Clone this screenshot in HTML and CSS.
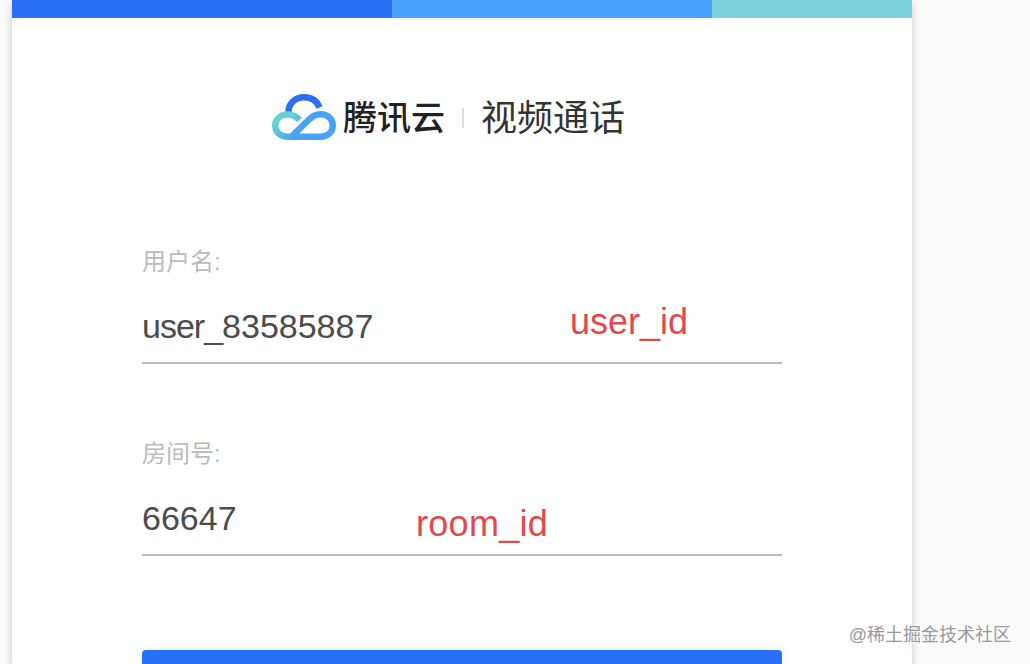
FILE: index.html
```
<!DOCTYPE html>
<html lang="zh-CN">
<head>
  <meta charset="UTF-8">
  <title>视频通话</title>
  <link rel="stylesheet" href="styles.css">
</head>
<body>

  <div class="login-card">
    <div class="color-bar">
      <div class="bar-blue"></div>
      <div class="bar-sky"></div>
      <div class="bar-teal"></div>
    </div>

    <div class="header">
      <svg class="logo" viewBox="0 0 64 46" fill="none" stroke-width="6.4">
        <defs>
          <linearGradient id="teal" x1="0" y1="0" x2="0.7" y2="1">
            <stop offset="0.3" stop-color="#6bd0d2"/>
            <stop offset="1" stop-color="#4aa9f2"/>
          </linearGradient>
        </defs>
        <path d="M16.500 18C16.500 9 23.500 3.300 32 3.300C39.500 3.300 45 7.300 47.500 13.500" stroke="#2d6ff3"/>
        <path d="M27.500 26C24.500 22.500 20.500 20.500 15.500 20.500C8.500 20.500 3.200 25.200 3.200 31.500C3.200 38 8.500 42.800 16 42.800H24" stroke="url(#teal)"/>
        <path d="M19.500 42.800H48C55.500 42.800 60.800 38 60.800 31.500C60.800 25 55.500 20.200 48.500 20.200C43.500 20.200 40 22.500 37 25.500L20 42.300" stroke="#48a2f8"/>
      </svg>
      <div class="brand">腾讯云</div>
      <div class="divider"></div>
      <div class="title">视频通话</div>
    </div>

    <div class="form">
      <div class="field">
        <div class="label">用户名:</div>
        <div class="value"><span class="prefix">user_</span>83585887</div>
        <div class="note note-user">user_id</div>
      </div>
      <div class="field">
        <div class="label">房间号:</div>
        <div class="value">66647</div>
        <div class="note note-room">room_id</div>
      </div>
      <div class="login-btn"></div>
    </div>
  </div>

  <div class="watermark">@稀土掘金技术社区</div>

</body>
</html>
```
FILE: styles.css
```
body {
  margin: 0;
  height: 664px;
  overflow: hidden;
  background: #fafafa;
  font-family: "Liberation Sans", "Noto Sans CJK SC", sans-serif;
}

.login-card {
  width: 900px;
  height: 664px;
  margin-left: 12px;
  background: #fff;
  box-shadow: 0 4px 8px rgba(0, 0, 0, 0.2);
}

.color-bar {
  display: flex;
  height: 18px;
}

.bar-blue {
  width: 380px;
  background: #2970f6;
}

.bar-sky {
  width: 320px;
  background: #48a3fb;
}

.bar-teal {
  flex: 1;
  background: #7bd2dc;
}

.header {
  display: flex;
  align-items: center;
  height: 50px;
  padding: 74px 0 0 260px;
}

.logo {
  width: 64px;
  height: 46px;
}

.brand {
  margin-left: 7px;
  padding-top: 2px;
  font-size: 34px;
  line-height: 50px;
  font-weight: 500;
  color: #222;
}

.divider {
  width: 2px;
  height: 20px;
  margin: 2px 17px 0;
  background: #ddd;
}

.title {
  padding-top: 4px;
  font-size: 36px;
  line-height: 50px;
  color: #333;
}

.form {
  width: 640px;
  padding: 102px 0 0 130px;
}

.field {
  position: relative;
  height: 118px;
  margin-bottom: 72px;
  border-bottom: 2px solid #bbb;
}

.label {
  font-size: 24px;
  line-height: 36px;
  color: #bbb;
}

.value {
  padding-top: 26px;
  font-size: 34px;
  line-height: 40px;
  color: #4a4c4e;
}

.prefix {
  letter-spacing: -1px;
}

/* red notes written over the inputs */
.note {
  position: absolute;
  font-size: 36px;
  line-height: 44px;
  color: #e04a4a;
}

.note-user {
  left: 428px;
  top: 56px;
}

.note-room {
  left: 274px;
  top: 66px;
  letter-spacing: 0.3px;
}

.login-btn {
  height: 14px;
  margin-top: 94px;
  border-radius: 4px 4px 0 0;
  background: #2970f6;
  box-shadow: 0 0 8px rgba(0, 0, 0, 0.08);
}

.watermark {
  position: absolute;
  right: 19px;
  bottom: 16px;
  font-size: 18px;
  line-height: 26px;
  color: #999;
  text-shadow: 1px 1px 1px #fff;
}
```
